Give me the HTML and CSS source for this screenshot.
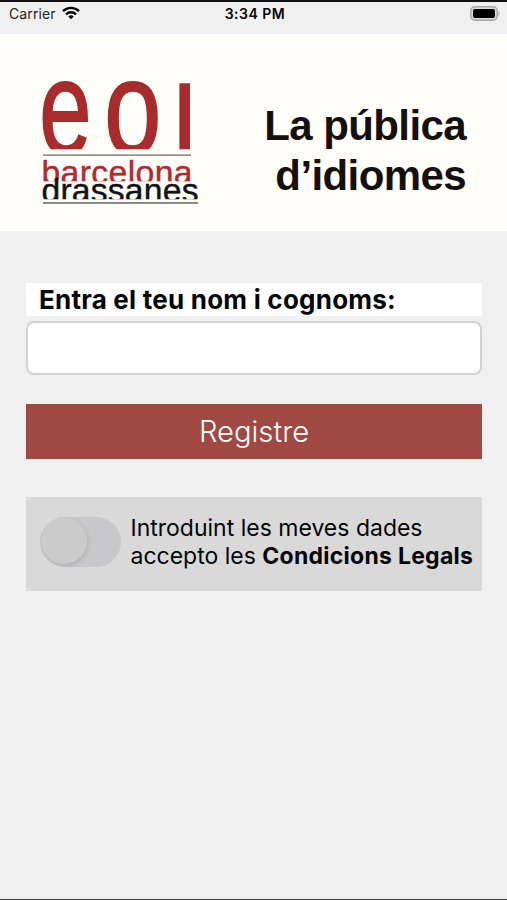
FILE: index.html
```html
<!DOCTYPE html>
<html lang="ca">
<head>
<meta charset="utf-8">
<title>EOI Barcelona Drassanes</title>
<link rel="stylesheet" href="styles.css">
</head>
<body>
<div class="screen">
  <header class="status">
    <div class="carrier"><span>Carrier</span>
      <svg class="wifi" width="18" height="14" viewBox="0 0 18 14" fill="none" stroke="#050505" stroke-width="2.4">
        <path d="M1 5.2C5.5.8 12.500.8 17 5.200"/>
        <path d="M4 8.300C6.800 5.600 11.200 5.600 14 8.300"/>
        <path d="M6.300 10.400Q9 8.300 11.700 10.400L9 13.200Z" fill="#050505" stroke="none"/>
      </svg>
    </div>
    <span class="time">3:34 PM</span>
    <svg class="battery" width="31" height="15" viewBox="0 0 31 15">
      <rect x=".8" y=".8" width="26.400" height="13.400" rx="4" fill="#ddd" stroke="#a5a5a5" stroke-width="1.400"/>
      <rect x="3" y="3" width="22" height="9" rx="2" fill="#000"/>
      <path d="M28.500 5Q31 7.500 28.500 10Z" fill="#a5a5a5"/>
    </svg>
  </header>
  <section class="banner">
    <svg class="logo" width="160" height="130" viewBox="40 77 160 130">
      <defs>
        <clipPath id="c1"><rect x="40" y="78" width="160" height="71.300"/></clipPath>
        <clipPath id="c2"><rect x="40" y="156" width="160" height="25.200"/></clipPath>
        <clipPath id="c3"><rect x="40" y="174" width="160" height="25.300"/></clipPath>
      </defs>
      <g clip-path="url(#c1)" class="big">
        <text transform="translate(39.300 153.500) scale(.69 .985)">e</text>
        <text transform="translate(104.300 153.500) scale(.755 .985)">o</text>
        <text transform="translate(173.200 155.500) scale(.76 1)">i</text>
      </g>
      <g clip-path="url(#c2)"><text class="word red" x="41.500" y="183.500" textLength="151">barcelona</text></g>
      <g clip-path="url(#c3)"><text class="word" x="41.500" y="201.700" textLength="157">drassanes</text></g>
      <path d="M43 155.200H191M43 203H198" stroke="#686862" stroke-width="1.300"/>
    </svg>
    <h1>La pública<br>d’idiomes</h1>
  </section>
  <main>
    <label class="label" for="name"><span>Entra el teu nom i cognoms:</span></label>
    <input id="name" class="field" type="text">
    <button class="submit"><span>Registre</span></button>
    <div class="terms">
      <span class="switch"><span class="knob"></span></span>
      <p><span>Introduint les meves dades</span><br><span>accepto les</span> <b>Condicions Legals</b></p>
    </div>
  </main>
</div>
</body>
</html>
```
FILE: styles.css
```css
* { box-sizing: border-box; }
body { margin: 0; background: #f0f0f0; font-family: Inter, "Liberation Sans", sans-serif; color: #050505; }
.screen { height: 900px; border-top: 2px solid #111; border-bottom: 1px solid #3a3a3a; overflow: hidden; }
.status { height: 32px; padding: 0 6px 0 9px; display: grid; grid-template-columns: 1fr auto 1fr; align-items: start; font-size: 14px; line-height: 24px; }
.carrier { display: flex; gap: 6px; color: #222; letter-spacing: .1px; }
.wifi { margin-top: 4px; }
.time { font-weight: 600; letter-spacing: .5px; }
.battery { justify-self: end; margin-top: 4px; }
.banner { height: 197px; background: #fffef9; display: flex; justify-content: space-between; padding: 43px 41px 0 40px; }
.logo { display: block; font-family: "Liberation Sans", sans-serif; }
.big { font-size: 136px; fill: #a92b2c; stroke: #a92b2c; stroke-width: 2px; }
.word { font-size: 33.700px; fill: #111; stroke: #111; stroke-width: .4px; }
.red { fill: #b4292d; stroke: #b4292d; }
h1 { margin: 24px 0 0; font: bold 42px/50px "Liberation Sans", sans-serif; letter-spacing: -.6px; text-align: right; color: #15100e; }
main { padding: 52px 25px 0 26px; display: flex; flex-direction: column; }
.label { height: 33px; padding-left: 13px; background: #fff; font-size: 26px; line-height: 33px; font-weight: 700; letter-spacing: .23px; white-space: nowrap; }
.field { height: 54px; margin: 5px 0 0; border: 2px solid #d2d2d2; border-radius: 8px; background: #fff; }
.submit { height: 55px; margin: 29px 0 0; border: 0; background: #a04842; color: #fff; font: 300 29.200px/55px Inter, sans-serif; padding: 0; }
.terms { height: 94px; margin-top: 38px; background: #d9d9d9; display: flex; padding: 17px 0 0 14px; }
.switch { width: 81px; height: 50px; margin-top: 3px; border-radius: 25px; background: #c8c8ca; overflow: hidden; }
.knob { display: block; width: 46px; height: 46px; margin: 1px; border-radius: 50%; background: #cbcbcb; box-shadow: 1px 2px 5px rgba(0,0,0,.12); }
.terms p { margin: 0 0 0 9.500px; font-size: 23px; line-height: 28px; white-space: nowrap; }
.terms b { font-weight: 700; letter-spacing: .26px; }
```
